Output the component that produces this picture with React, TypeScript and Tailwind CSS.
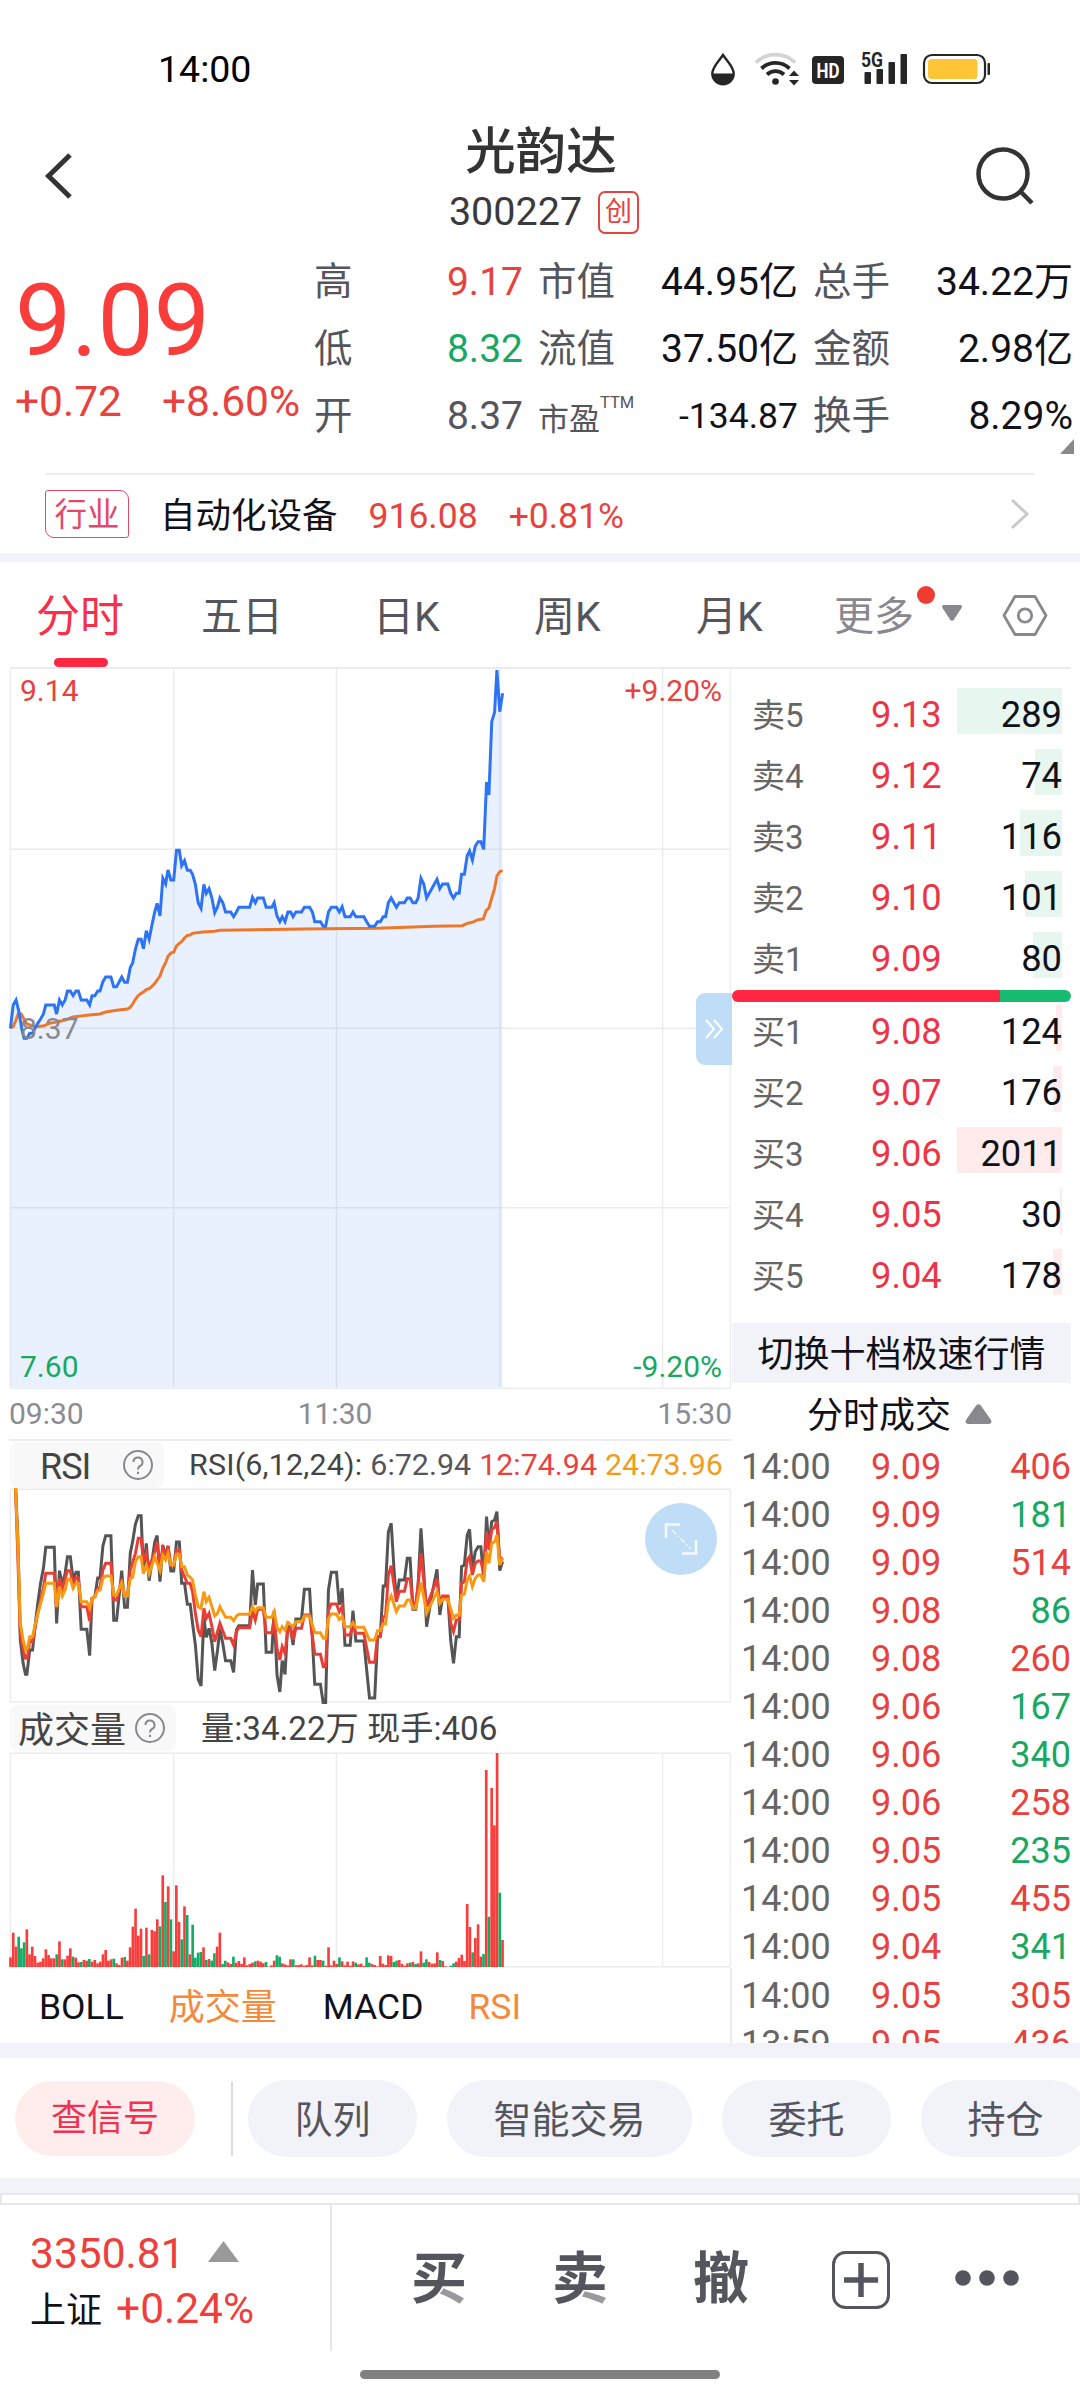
import { clsx } from 'clsx';

interface Level {
  label: string;
  price: string;
  qty: number;
  bar: number;
}

const sells: Level[] = [
  { label: '卖5', price: '9.13', qty: 289, bar: 105 },
  { label: '卖4', price: '9.12', qty: 74, bar: 27 },
  { label: '卖3', price: '9.11', qty: 116, bar: 42 },
  { label: '卖2', price: '9.10', qty: 101, bar: 37 },
  { label: '卖1', price: '9.09', qty: 80, bar: 29 },
];

const buys: Level[] = [
  { label: '买1', price: '9.08', qty: 124, bar: 6 },
  { label: '买2', price: '9.07', qty: 176, bar: 9 },
  { label: '买3', price: '9.06', qty: 2011, bar: 105 },
  { label: '买4', price: '9.05', qty: 30, bar: 2 },
  { label: '买5', price: '9.04', qty: 178, bar: 9 },
];

const trades = [
  { time: '14:00', price: '9.09', qty: 406, up: true },
  { time: '14:00', price: '9.09', qty: 181, up: false },
  { time: '14:00', price: '9.09', qty: 514, up: true },
  { time: '14:00', price: '9.08', qty: 86, up: false },
  { time: '14:00', price: '9.08', qty: 260, up: true },
  { time: '14:00', price: '9.06', qty: 167, up: false },
  { time: '14:00', price: '9.06', qty: 340, up: false },
  { time: '14:00', price: '9.06', qty: 258, up: true },
  { time: '14:00', price: '9.05', qty: 235, up: false },
  { time: '14:00', price: '9.05', qty: 455, up: true },
  { time: '14:00', price: '9.04', qty: 341, up: false },
  { time: '14:00', price: '9.05', qty: 305, up: true },
  { time: '13:59', price: '9.05', qty: 436, up: true },
];

const priceLine =
  '22,1105 28,1035 34,1020 40,1055 46,1105 51,1135 57,1135 63,1120 69,1120 74,1105 80,1090 86,1077 92,1062 97,1035 115,1035 120,1062 126,1020 132,1035 138,1020 143,993 149,993 155,1007 161,993 166,993 172,1020 184,1020 190,1035 195,1007 201,1007 207,993 212,993 218,965 224,951 235,951 241,980 247,980 258,951 264,967 270,967 276,923 281,909 287,867 293,838 299,838 304,866 310,812 316,838 322,795 328,755 333,730 339,768 345,655 351,672 356,630 362,660 368,660 374,571 380,571 385,617 391,602 397,631 403,631 408,643 414,673 420,728 426,745 432,673 437,700 443,686 449,714 455,758 461,740 466,714 472,728 478,756 489,756 495,770 501,756 506,742 529,742 535,712 541,728 546,714 558,714 564,742 576,742 581,728 587,768 593,785 598,770 604,785 610,756 616,756 621,770 627,756 639,756 645,742 656,742 662,756 667,785 679,785 685,799 690,799 696,756 702,742 713,742 719,756 725,740 731,770 742,770 748,756 754,770 771,770 777,785 783,799 794,799 800,785 806,785 812,770 817,770 823,728 829,714 840,742 846,728 857,728 863,714 869,714 875,728 881,728 886,714 892,655 898,672 904,714 926,658 932,686 938,672 949,672 955,700 961,714 967,700 973,700 978,643 984,643 990,587 995,573 1001,600 1007,559 1013,545 1019,545 1025,568 1031,366 1036,405 1042,185 1048,157 1053,30 1059,155 1065,100';

const avgLine =
  '22,1103 28,1100 34,1080 39,1060 45,1062 51,1078 57,1092 75,1100 92,1098 104,1090 120,1086 138,1080 155,1071 184,1066 212,1062 224,1056 247,1051 270,1047 276,1042 281,1032 287,1018 293,1007 299,1000 304,996 310,989 316,986 322,979 328,970 333,960 339,948 345,924 351,908 356,889 362,879 368,877 374,858 380,850 385,845 391,834 397,826 403,825 408,820 430,816 455,814 466,811 540,809 640,807 800,805 860,802 920,799 980,797 990,790 1001,787 1013,779 1024,777 1030,752 1036,744 1042,714 1048,685 1053,648 1059,635 1065,632';

const rsi6 =
  '33,444 38,600 43,900 49,970 54,1003 57,1003 63,930 69,930 75,850 80,790 86,730 92,685 97,622 115,622 120,850 126,692 132,735 138,700 143,650 149,650 155,720 161,697 166,697 172,868 184,868 190,947 195,775 201,770 207,714 212,714 218,618 224,587 235,587 241,841 247,841 258,692 264,802 270,802 276,640 281,605 287,552 293,527 299,527 304,700 310,610 316,722 328,605 333,587 339,725 345,615 351,650 356,618 362,693 368,693 374,606 380,606 385,730 391,730 397,793 403,793 408,850 414,915 420,1018 426,1038 432,830 437,892 443,865 449,910 455,992 461,930 466,868 472,910 478,962 489,962 495,997 501,870 506,857 529,857 535,690 541,795 546,732 558,732 564,937 576,937 581,812 587,1005 593,1056 598,962 604,1003 610,845 616,870 621,915 627,837 639,837 645,748 656,748 662,900 667,1033 679,1033 685,1090 690,1090 696,750 702,697 713,697 719,795 725,745 731,916 742,916 748,812 754,903 771,903 777,990 783,1074 794,1074 800,892 806,885 812,738 817,738 823,575 829,550 835,690 840,780 846,720 857,720 863,655 869,655 875,808 881,808 886,735 892,565 898,695 904,860 915,765 926,688 932,825 938,770 949,770 955,900 961,970 967,890 973,890 978,680 984,675 990,585 995,568 1001,690 1007,635 1013,620 1019,620 1025,715 1031,530 1036,620 1042,545 1048,540 1053,515 1056,600 1059,692 1065,665';

const rsi12 =
  '33,444 43,880 49,930 54,955 58,955 63,900 69,905 80,820 92,745 97,700 115,700 120,805 126,715 132,745 143,692 149,692 155,735 161,713 166,713 172,800 184,800 190,843 195,775 201,770 207,745 212,742 218,690 224,670 235,670 241,780 247,780 258,720 264,768 270,768 276,690 287,640 293,595 299,595 304,665 310,640 316,685 328,635 333,605 339,680 345,625 351,645 356,618 362,675 368,675 374,630 380,630 385,690 397,730 403,730 408,755 414,820 420,870 426,890 432,805 437,835 443,820 449,860 455,905 466,850 478,895 489,895 495,915 501,875 506,863 529,863 535,812 541,840 546,808 558,808 564,878 576,878 581,835 587,925 593,960 598,920 604,940 610,865 616,865 621,900 627,865 639,865 645,825 656,825 667,943 679,943 685,980 690,980 696,810 702,792 713,792 719,815 725,800 731,885 742,885 748,852 754,880 771,880 777,925 783,967 794,967 800,890 806,890 812,830 817,830 823,705 829,677 840,785 846,754 857,754 863,716 869,716 875,790 881,790 886,735 892,640 898,720 904,800 926,716 932,790 938,768 949,768 955,850 961,875 967,840 973,840 978,730 984,725 990,660 995,650 1001,705 1007,670 1013,663 1019,663 1025,700 1031,575 1036,630 1042,570 1048,562 1053,543 1059,660 1065,652';

const rsi24 =
  '33,444 38,620 43,850 49,900 54,930 58,925 63,890 69,890 75,850 80,820 92,760 97,730 115,730 120,800 126,740 132,768 138,750 143,718 149,718 155,745 161,730 166,730 172,785 184,785 190,805 195,775 201,770 207,752 212,750 218,715 224,708 235,708 241,765 247,765 258,728 264,768 270,768 276,715 281,712 287,665 293,650 299,650 304,700 310,675 316,702 328,650 339,692 345,645 351,660 356,640 362,675 368,675 374,643 380,643 385,680 391,680 397,705 403,712 408,720 414,765 420,800 426,805 432,755 437,785 443,772 449,800 455,828 461,820 466,800 478,832 489,832 495,842 501,828 506,823 529,823 535,800 541,815 546,803 558,803 564,832 576,832 581,815 587,862 593,875 598,860 604,870 610,848 621,860 627,845 639,845 645,828 656,828 667,878 679,878 685,895 690,895 696,835 702,822 713,822 719,838 725,830 731,860 742,860 748,848 754,862 771,862 783,900 794,900 800,872 806,872 812,852 817,852 823,785 829,768 840,815 846,798 857,798 863,780 869,780 875,805 881,805 892,728 898,770 904,820 926,755 932,790 938,778 949,778 961,835 967,825 973,825 978,765 984,762 990,720 995,708 1001,740 1007,715 1013,705 1019,705 1025,725 1031,635 1036,670 1042,610 1048,605 1053,585 1059,675 1065,655';

// one bar per minute from 09:30, negative = falling minute
const volumes = [
  28, 102, 60, -90, -55, -73, 112, 37, 60, 32, 12, 15, 25, 52, 35, 25, 25, -37, 76, -22, 22, 33, 55, -30, 27, 13, -14, 20, 18, -23,
  15, 20, 10, 15, 37, 50, 18, 22, -24, 10, 5, 27, -29, 18, 58, 120, 174, 93, 114, -32, 117, -37, 110, 106, 142, -121, 274, -194, 241, -142,
  46, 244, 134, -82, 181, -155, 37, -126, -27, -42, -44, 58, -20, 23, -18, -40, 60, 102, -8, -18, 13, 8, -30, 12, 17, 8, 28, 4, 8, 12,
  -16, 18, 15, 10, -14, 0, 4, 18, -34, -30, 10, 7, 4, 22, -22, 4, 5, 7, 3, 5, 28, 4, -33, 20, 20, -18, 3, 58, 4, 18,
  8, -28, 16, 4, 15, 3, 16, -12, 7, 9, 2, -28, -12, 8, 5, 1, 32, 9, 5, 34, 32, -14, -18, 20, 8, 3, 10, -12, 14, -8,
  10, 46, -12, -22, 14, 9, 10, 43, -20, 17, 1, 0, -3, -10, 15, 26, 36, 17, 188, 119, -43, 86, 127, 30, -38, 590, -150, 536, 424, 641,
  -222, 80,
];

function GridLines({ xs, ys, top, bottom }: { xs: number[]; ys: number[]; top: number; bottom: number }) {
  return (
    <g stroke="#ebecee" strokeWidth="1.5">
      {xs.map((x) => (
        <line key={x} x1={x} x2={x} y1={top} y2={bottom} vectorEffect="non-scaling-stroke" />
      ))}
      {ys.map((y) => (
        <line key={y} x1="22" x2="1548" y1={y} y2={y} vectorEffect="non-scaling-stroke" />
      ))}
    </g>
  );
}

function Line({ points, color, width = 3 }: { points: string; color: string; width?: number }) {
  return <polyline points={points} fill="none" stroke={color} strokeWidth={width} vectorEffect="non-scaling-stroke" />;
}

function StatusBar() {
  return (
    <div className="flex h-[112px] items-center justify-between pt-[28px] pl-[158px] pr-[70px]">
      <span className="text-[37.500px] leading-none text-black">14:00</span>
      <svg width="320" height="50" viewBox="690 45 320 50" fill="#262626">
        {/* drop */}
        <path d="M723 55 C719 61 712.3 67 712.3 73.500 A10.700 10.700 0 0 0 733.700 73.500 C733.700 67 727 61 723 55Z" fill="none" stroke="#262626" strokeWidth="2.400" />
        <path d="M712 73.500 H734 A11 11 0 0 1 712 73.500Z" />
        {/* wifi */}
        <g fill="none" strokeWidth="3.800">
          <path d="M756 62.500 A28 28 0 0 1 795 62.500" stroke="#d4d4d4" />
          <path d="M761.500 68.500 A20.500 20.500 0 0 1 789.500 68.500" stroke="#262626" />
          <path d="M767 74.500 A12.500 12.500 0 0 1 784 74.500" stroke="#262626" />
        </g>
        <circle cx="775.500" cy="81.500" r="3.300" />
        <path d="M794 70.500 L799 76 H789Z M794 85.500 L799 80 H789Z" />
        {/* HD */}
        <rect x="812" y="56" width="32" height="28" rx="4" />
        <text x="828" y="77.700" fill="#fff" fontSize="21" fontWeight="700" textAnchor="middle" textLength="23" lengthAdjust="spacingAndGlyphs">HD</text>
        {/* signal */}
        <text x="861" y="67" fontSize="20" fontWeight="700" textLength="22" lengthAdjust="spacingAndGlyphs">5G</text>
        <rect x="864.500" y="72" width="6.500" height="12" rx="1" />
        <rect x="876.500" y="69" width="6.500" height="15" rx="1" />
        <rect x="888.500" y="62" width="6.500" height="22" rx="1" />
        <rect x="900.500" y="54" width="6.500" height="30" rx="1" />
        {/* battery */}
        <rect x="924" y="55" width="61" height="28" rx="8" fill="none" stroke="#262626" strokeWidth="2.200" />
        <rect x="928" y="59" width="49.500" height="20" rx="3.500" fill="#ffc536" />
        <rect x="987.500" y="63" width="2.500" height="12" rx="1" />
      </svg>
    </div>
  );
}

function Header() {
  return (
    <div className="flex h-[128px] items-center justify-between pl-[39px] pr-[44px]">
      <svg width="64" height="50" viewBox="0 0 64 50" fill="none" stroke="#333" strokeWidth="5">
        <path d="M31 4 L9.500 25 L31 46" />
      </svg>
      <div className="flex h-[128px] flex-col items-center pt-[10px] pl-[7px]">
        <div className="text-[50.500px] font-medium leading-[60px] text-[#333]">光韵达</div>
        <div className="flex h-[64px] items-center gap-[16px] pt-[2px] pl-[6px]">
          <span className="text-[39.500px] leading-none text-[#3a3a3e]">300227</span>
          <span className="flex h-[43px] w-[41px] items-center justify-center rounded-[7px] border-2 border-[#e5443f] text-[27px] leading-none text-[#e5443f]">
            创
          </span>
        </div>
      </div>
      <svg width="64" height="64" viewBox="972 144 64 64" fill="none" stroke="#333" strokeWidth="4.500">
        <circle cx="1003" cy="174" r="24.500" />
        <path d="M1020 191 L1032 203" />
      </svg>
    </div>
  );
}

function Stat({ label, value, color = 'text-[#111119]' }: { label: string; value: string; color?: string }) {
  return (
    <div className="flex h-[67px] items-center justify-between text-[39px] leading-none">
      <span className="text-[38.500px] text-[#55555d]">{label}</span>
      <span className={color}>{value}</span>
    </div>
  );
}

function Quote() {
  return (
    <div className="relative flex h-[233px] pt-[9px]">
      <div className="w-[314px] pl-[15px] pt-[22px] text-[#e8413e]">
        <div className="text-[100px] leading-[100px] text-[#fa3d3a]">9.09</div>
        <div className="flex h-[63px] items-center gap-[40px] whitespace-nowrap text-[42.500px] leading-none">
          <span>+0.72</span>
          <span>+8.60%</span>
        </div>
      </div>
      <div className="w-[209px]">
        <Stat label="高" value="9.17" color="text-[#e8413e]" />
        <Stat label="低" value="8.32" color="text-[#18a862]" />
        <Stat label="开" value="8.37" color="text-[#55555d]" />
      </div>
      <div className="ml-[15px] w-[260px]">
        <Stat label="市值" value="44.95亿" />
        <Stat label="流值" value="37.50亿" />
        <div className="flex h-[67px] items-center justify-between leading-none">
          <span className="flex text-[31px] text-[#55555d]">
            <span className="pt-[5px]">市盈</span>
            <span className="-mt-[4px] text-[16.500px]">TTM</span>
          </span>
          <span className="text-[35.500px] text-[#111119]">-134.87</span>
        </div>
      </div>
      <div className="ml-[15px] w-[260px]">
        <Stat label="总手" value="34.22万" />
        <Stat label="金额" value="2.98亿" />
        <Stat label="换手" value="8.29%" />
      </div>
      <svg className="absolute right-[6px] bottom-[19px]" width="14" height="15" viewBox="0 0 14 15">
        <path d="M14 0 V15 H0Z" fill="#88888e" />
      </svg>
    </div>
  );
}

function Industry() {
  return (
    <div className="mx-[45px] flex h-[80px] items-center border-t-2 border-[#ececee] text-[35.500px] leading-none text-[#e8413e]">
      <span className="flex h-[48px] w-[84px] items-center justify-center rounded-tl-[3px] rounded-tr-[9px] rounded-br-[3px] rounded-bl-[9px] border-[1.5px] border-[#e2486a] pt-[2px] text-[32.500px] text-[#e2486a]">
        行业
      </span>
      <span className="ml-[31px] pt-[5px] text-[#111119]">自动化设备</span>
      <span className="ml-[31px] pt-[5px]">916.08</span>
      <span className="ml-[31px] pt-[5px]">+0.81%</span>
      <svg className="ml-auto mr-[5px]" width="20" height="32" viewBox="0 0 20 32" fill="none" stroke="#c9c9cc" strokeWidth="3">
        <path d="M2 2 L17 16 L2 30" />
      </svg>
    </div>
  );
}

function PeriodTabs() {
  return (
    <div className="flex h-[105px] items-center text-[41px] leading-none text-[#55555d]">
      <div className="relative ml-[36px] flex h-full w-[88px] items-center justify-center pt-[5px] text-[44px] text-[#f5304a]">
        分时
        <span className="absolute bottom-0 left-[18px] h-[9px] w-[54px] rounded-full bg-[#ff2741]" />
      </div>
      <span className="ml-[77px] w-[82px] pt-[5px]">五日</span>
      <span className="ml-[90px] w-[70px] pt-[5px]">日K</span>
      <span className="ml-[91px] w-[70px] pt-[5px]">周K</span>
      <span className="ml-[92px] w-[70px] pt-[5px]">月K</span>
      <span className="relative ml-[68px] w-[80px] pt-[5px] text-[40px] whitespace-nowrap text-[#88888e]">
        更多
        <span className="absolute -right-[21px] -top-[6px] size-[18px] rounded-full bg-[#ef3b30]" />
      </span>
      <svg className="ml-[27px] -mt-[3px]" width="22" height="18" viewBox="0 0 22 18" fill="#88888e">
        <path d="M3 1 H19 Q22 1 20.500 4 L13 15.500 Q11 18 9 15.500 L1.500 4 Q0 1 3 1Z" />
      </svg>
      <svg className="ml-[39px]" width="46" height="42" viewBox="0 0 46 42" fill="none" stroke="#88888e" strokeWidth="2.800" strokeLinejoin="round">
        <path d="M13 2.500 H33 L44 21.500 L33 40.500 H13 L2 21.500Z" />
        <circle cx="23" cy="21.500" r="6.700" />
      </svg>
    </div>
  );
}

function HelpIcon() {
  return (
    <svg width="32" height="32" viewBox="0 0 32 32" fill="none" stroke="#88888e" strokeWidth="2">
      <circle cx="16" cy="16" r="14" />
      <path d="M11.500 13 A4.500 4.500 0 1 1 18 17 Q16 18 16 20.500" />
      <path d="M16 22.800 V25" />
    </svg>
  );
}

function PriceChart() {
  return (
    <div className="relative h-[723px] text-[30px] leading-none">
      <svg width="731" height="723" viewBox="0 21 1549 2169" preserveAspectRatio="none">
        <GridLines xs={[22, 368, 713, 1059, 1404, 1548]} ys={[568, 1105, 1643, 2185]} top={24} bottom={2185} />
        <polygon points={`${priceLine} 1065,2181 22,2181`} fill="#2f74f5" fillOpacity="0.1" />
        <Line points={avgLine} color="#f0762a" />
        <Line points={priceLine} color="#2d73f5" />
      </svg>
      <span className="absolute left-[20px] top-[9px] text-[#e8413e]">9.14</span>
      <span className="absolute right-[10px] top-[9px] text-[#e8413e]">+9.20%</span>
      <span className="absolute left-[20px] top-[347px] text-[#88888e]">8.37</span>
      <span className="absolute left-[20px] top-[685px] text-[#18a862]">7.60</span>
      <span className="absolute right-[10px] top-[685px] text-[#18a862]">-9.20%</span>
      <span className="absolute right-0 top-[326px] flex h-[72px] w-[36px] items-center justify-center rounded-l-[9px] bg-[#bfddf6]">
        <svg width="22" height="22" viewBox="0 0 22 22" fill="none" stroke="#fff" strokeWidth="2">
          <path d="M3 2 L11 11 L3 20 M11 2 L19 11 L11 20" />
        </svg>
      </span>
    </div>
  );
}

function RsiPanel() {
  return (
    <>
      <div className="ml-[9px] flex h-[49px] items-center border-t-2 border-[#ededef] text-[30.400px] leading-none text-[#444]">
        <div className="ml-px flex h-[46px] w-[154px] items-center justify-between rounded-[8px] bg-[#f8f8f8] pl-[30px] pr-[10px]">
          <span className="pt-[4px] text-[36px] tracking-[-1px]">RSI</span>
          <HelpIcon />
        </div>
        <div className="ml-[25px] flex gap-[8px] whitespace-nowrap pt-[2px]">
          <span className="tracking-[0.2px]">RSI(6,12,24):</span>
          <span className="text-[#55555d]">6:72.94</span>
          <span className="text-[#e8413e]">12:74.94</span>
          <span className="text-[#f39c1c]">24:73.96</span>
        </div>
      </div>
      <div className="relative h-[216px]">
        <svg width="731" height="216" viewBox="0 444 1549 648" preserveAspectRatio="none">
          <GridLines xs={[22, 1548]} ys={[448, 1086]} top={448} bottom={1086} />
          <Line points={rsi6} color="#555" />
          <Line points={rsi12} color="#e83e35" />
          <Line points={rsi24} color="#f79a12" />
        </svg>
        <span className="absolute right-[15px] top-[15px] flex size-[72px] items-center justify-center rounded-full bg-[#bfddf6]">
          <svg width="34" height="34" viewBox="0 0 34 34" fill="none" stroke="#fff" strokeOpacity="0.85" strokeWidth="2.500">
            <path d="M2 16 V2.500 H16 M18 31.500 H32 V18" />
            <path d="M8 8 L27 27" strokeWidth="1.200" strokeDasharray="6 2 2 2" />
          </svg>
        </span>
      </div>
    </>
  );
}

function VolumePanel() {
  return (
    <>
      <div className="flex h-[48px] items-center pl-[10px] leading-none text-[#444]">
        <div className="flex h-[46px] w-[166px] items-center rounded-[8px] bg-[#f8f8f8] pl-[8px]">
          <span className="pt-[6px] text-[36px]">成交量</span>
          <span className="ml-[8px]">
            <HelpIcon />
          </span>
        </div>
        <span className="ml-[25px] pt-[2px] text-[33.200px]">量:34.22万 现手:406</span>
      </div>
      <svg className="block" width="731" height="216" viewBox="0 156 1549 648" preserveAspectRatio="none">
        <GridLines xs={[22, 368, 713, 1404, 1548]} ys={[160, 800]} top={160} bottom={800} />
        {volumes.map((v, i) => (
          <rect
            key={i}
            x={19.5 + i * 5.76}
            y={800 - Math.abs(v)}
            width="5.6"
            height={Math.abs(v) + 1}
            fill={v < 0 ? '#0fae65' : '#fa3d3a'}
          />
        ))}
      </svg>
      <div className="flex h-[75px] items-center border-r-2 border-[#ececee] pl-[39px] pt-[4px] text-[35.500px] leading-none text-[#111119]">
        <span>BOLL</span>
        <span className="ml-[45px] text-[36px] text-[#f5893b]">成交量</span>
        <span className="ml-[46px]">MACD</span>
        <span className="ml-[45px] text-[#f5893b]">RSI</span>
      </div>
    </>
  );
}

function LevelRow({ level, sell }: { level: Level; sell?: boolean }) {
  return (
    <div className="flex h-[61px] items-center pl-[20px] pr-[9px] text-[36.300px] leading-none">
      <span className="w-[119px] pt-px text-[33px] text-[#666]">{level.label}</span>
      <span className="text-[#ef3346]">{level.price}</span>
      <span className="relative ml-auto text-[#111119]">
        <span
          className={clsx('absolute right-0 -top-[9px] h-[46px]', sell ? 'bg-[#e8f6f0]' : 'bg-[#ffebec]')}
          style={{ width: level.bar }}
        />
        <span className="relative">{level.qty}</span>
      </span>
    </div>
  );
}

function OrderBook() {
  return (
    <div className="h-[1376px] w-[339px] overflow-hidden pt-[17.500px]">
      {sells.map((l) => (
        <LevelRow key={l.label} level={l} sell />
      ))}
      <div className="flex h-[12px] overflow-hidden rounded-full">
        <div className="w-[268px] bg-[#ff2741]" />
        <div className="flex-1 bg-[#18bb72]" />
      </div>
      {buys.map((l) => (
        <LevelRow key={l.label} level={l} />
      ))}
      <div className="mt-[16px] flex h-[60px] items-center justify-center bg-[#f2f3f8] pt-[4px] text-[36px] leading-none text-[#111119]">
        切换十档极速行情
      </div>
      <div className="flex h-[60px] items-center pl-[75px] pt-[6px] text-[36px] leading-none text-[#111119]">
        分时成交
        <svg className="-mt-[4px] ml-[14px]" width="27" height="20" viewBox="0 0 27 20" fill="#88888e">
          <path d="M11.500 1 Q13.500 -0.500 15.500 1 L26 16 Q27.500 19.500 24 20 H3 Q-0.500 19.500 1 16Z" />
        </svg>
      </div>
      {trades.map((t, i) => (
        <div key={i} className="flex h-[48.1px] items-center pl-[9px] text-[36px] leading-none text-[#e8413e]">
          <span className="w-[130px] text-[#666]">{t.time}</span>
          <span>{t.price}</span>
          <span className={clsx('ml-auto', !t.up && 'text-[#18a862]')}>{t.qty}</span>
        </div>
      ))}
    </div>
  );
}

function Actions() {
  return (
    <div className="flex h-[120px] items-center overflow-hidden pl-[15px] text-[38px] leading-none text-[#55555d]">
      <span className="flex h-[75px] w-[180px] shrink-0 items-center justify-center rounded-full bg-[#ffeced] pt-[2px] text-[36px] text-[#ef3350]">
        查信号
      </span>
      <span className="ml-[36px] mr-[15px] h-[75px] w-[2px] shrink-0 bg-[#dcdcde]" />
      <div className="flex gap-[30px]">
        {['队列', '智能交易', '委托', '持仓'].map((name) => (
          <span key={name} className="flex h-[77px] shrink-0 items-center rounded-full bg-[#f2f3f8] px-[46.500px] pt-[4px]">
            {name}
          </span>
        ))}
      </div>
    </div>
  );
}

function BottomBar() {
  return (
    <div className="flex h-[146px] text-[42.500px] leading-none text-[#ee3f3c]">
      <div className="w-[332px] border-r-2 border-[#e6e6e8] pl-[30px] pt-[21px]">
        <div className="flex h-[56px] items-center">
          3350.81
          <svg className="-mt-[6px] ml-[23px]" width="31" height="21" viewBox="0 0 31 21">
            <path d="M15.500 0 L31 21 H0Z" fill="#999" />
          </svg>
        </div>
        <div className="flex h-[54px] items-center">
          <span className="pt-[3px] text-[36px] text-[#111119]">上证</span>
          <span className="ml-[14px]">+0.24%</span>
        </div>
      </div>
      <div className="flex items-start pt-[46px] text-[56px] font-bold text-[#55555d]">
        <span className="relative ml-[79px]">
          买
          <span className="absolute right-[2px] bottom-[2px] h-[16px] w-[24px] bg-white/40" />
        </span>
        <span className="relative ml-[85px]">
          卖
          <span className="absolute right-[2px] bottom-[2px] h-[14px] w-[24px] bg-white/40" />
        </span>
        <span className="ml-[85px]">撤</span>
        <svg className="ml-[83px]" width="58" height="58" viewBox="0 0 58 58" fill="none" stroke="#55555d">
          <rect x="1.500" y="1.500" width="55" height="55" rx="12" strokeWidth="3" />
          <path d="M12 29 H46 M29 12 V46" strokeWidth="5.500" />
        </svg>
        <svg className="ml-[64px]" width="66" height="58" viewBox="0 0 66 58" fill="#55555d">
          <circle cx="9" cy="27" r="7.800" />
          <circle cx="33" cy="27" r="7.800" />
          <circle cx="57" cy="27" r="7.800" />
        </svg>
      </div>
    </div>
  );
}

export default function App() {
  return (
    <div className="h-[2400px] w-[1080px] overflow-hidden bg-white font-['Roboto','Noto_Sans_CJK_SC',sans-serif]" lang="zh-CN">
      <StatusBar />
      <Header />
      <Quote />
      <Industry />
      <div className="h-[9px] bg-[#f2f3f8]" />
      <PeriodTabs />
      <div className="relative flex h-[1376px] overflow-hidden">
        <div className="absolute left-[10px] top-0 h-[2px] w-[1061px] bg-[#ececee]" />
        <div className="w-[732px]">
          <PriceChart />
          <div className="flex h-[49px] items-center pl-[9px] pb-[2px] text-[30px] leading-none text-[#8b8b92]">
            <span className="flex-1">09:30</span>
            <span className="-ml-[71px]">11:30</span>
            <span className="flex-1 text-right">15:30</span>
          </div>
          <RsiPanel />
          <VolumePanel />
        </div>
        <OrderBook />
      </div>
      <div className="h-[15px] bg-[#f2f3f8]" />
      <Actions />
      <div className="h-[15px] bg-[#f2f3f8]" />
      <div className="h-[12px] border-2 border-[#e8e8ea]" />
      <BottomBar />
      <div className="mx-auto mt-[19px] h-[9px] w-[360px] rounded-full bg-[#808080]" />
    </div>
  );
}
